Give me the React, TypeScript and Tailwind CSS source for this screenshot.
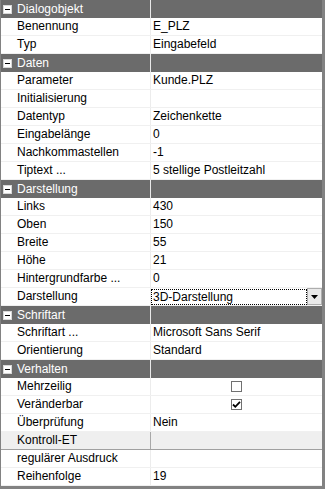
import React from "react";

type Row =
  | { kind: "text"; label: string; value?: string }
  | { kind: "check"; label: string; checked: boolean }
  | { kind: "select"; label: string; value: string }
  | { kind: "disabled"; label: string };

interface Section {
  title: string;
  rows: Row[];
}

const sections: Section[] = [
  {
    title: "Dialogobjekt",
    rows: [
      { kind: "text", label: "Benennung", value: "E_PLZ" },
      { kind: "text", label: "Typ", value: "Eingabefeld" },
    ],
  },
  {
    title: "Daten",
    rows: [
      { kind: "text", label: "Parameter", value: "Kunde.PLZ" },
      { kind: "text", label: "Initialisierung" },
      { kind: "text", label: "Datentyp", value: "Zeichenkette" },
      { kind: "text", label: "Eingabelänge", value: "0" },
      { kind: "text", label: "Nachkommastellen", value: "-1" },
      { kind: "text", label: "Tiptext ...", value: "5 stellige Postleitzahl" },
    ],
  },
  {
    title: "Darstellung",
    rows: [
      { kind: "text", label: "Links", value: "430" },
      { kind: "text", label: "Oben", value: "150" },
      { kind: "text", label: "Breite", value: "55" },
      { kind: "text", label: "Höhe", value: "21" },
      { kind: "text", label: "Hintergrundfarbe ...", value: "0" },
      { kind: "select", label: "Darstellung", value: "3D-Darstellung" },
    ],
  },
  {
    title: "Schriftart",
    rows: [
      { kind: "text", label: "Schriftart ...", value: "Microsoft Sans Serif" },
      { kind: "text", label: "Orientierung", value: "Standard" },
    ],
  },
  {
    title: "Verhalten",
    rows: [
      { kind: "check", label: "Mehrzeilig", checked: false },
      { kind: "check", label: "Veränderbar", checked: true },
      { kind: "text", label: "Überprüfung", value: "Nein" },
      { kind: "disabled", label: "Kontroll-ET" },
      { kind: "text", label: "regulärer Ausdruck" },
      { kind: "text", label: "Reihenfolge", value: "19" },
    ],
  },
];

function MinusBox() {
  return (
    <span className="flex h-[9px] w-[9px] items-center justify-center border border-[#d8d8d8] bg-white">
      <span className="h-[1px] w-[5px] bg-black" />
    </span>
  );
}

function CheckBox({ checked }: { checked: boolean }) {
  return (
    <span className="flex h-[11px] w-[11px] items-center justify-center border border-[#707070] bg-white">
      {checked ? (
        <svg width="9" height="9" viewBox="0 0 9 9">
          <path d="M1 4.5 L3.3 6.8 L8 1.8" fill="none" stroke="#000" strokeWidth="1.8" />
        </svg>
      ) : null}
    </span>
  );
}

function SectionHeader({ title }: { title: string }) {
  return (
    <div className="grid h-[18px] grid-cols-[149px_1px_1fr] bg-[#6b6b6b] text-white">
      <div className="flex items-center gap-[5px] pl-[2px]">
        <MinusBox />
        <span className="leading-[18px]">{title}</span>
      </div>
      <div className="bg-[#e8e8e8]" />
      <div />
    </div>
  );
}

function PropertyRow({ row }: { row: Row }) {
  const disabled = row.kind === "disabled";
  return (
    <div
      className={
        disabled
          ? "grid h-[18px] grid-cols-[149px_1px_1fr] border-b border-[#a0a0a0] bg-[#efefef]"
          : "grid h-[18px] grid-cols-[149px_1px_1fr] border-b border-[#f0f0f0] bg-white"
      }
    >
      <div className="truncate pl-[16px] leading-[17px]">{row.label}</div>
      <div className={disabled ? "bg-[#a8a8a8]" : "bg-[#ececec]"} />
      {row.kind === "text" ? (
        <div className="truncate pl-[2px] leading-[17px]">{row.value}</div>
      ) : null}
      {row.kind === "check" ? (
        <div className="flex items-center justify-center">
          <CheckBox checked={row.checked} />
        </div>
      ) : null}
      {row.kind === "select" ? (
        <div className="flex h-[17px] items-center">
          <div className="flex h-[16px] flex-1 items-center border border-dotted border-black pl-[1px] leading-[14px]">
            {row.value}
          </div>
          <div className="flex h-[17px] w-[15px] items-center justify-center border border-[#adadad] bg-[#e9e9e9]">
            <svg width="7" height="4" viewBox="0 0 7 4">
              <path d="M0 0 H7 L3.5 4 Z" fill="#000" />
            </svg>
          </div>
        </div>
      ) : null}
      {disabled ? <div /> : null}
    </div>
  );
}

export default function App() {
  return (
    <div
      className="h-[489px] w-[325px] overflow-hidden border-b-[3px] border-l border-r-[3px] border-[#828282] bg-white text-[12px] text-black"
      style={{ fontFamily: '"Liberation Sans", Arial, sans-serif' }}
    >
      {sections.map((section) => (
        <div key={section.title}>
          <SectionHeader title={section.title} />
          {section.rows.map((row) => (
            <PropertyRow key={section.title + row.label} row={row} />
          ))}
        </div>
      ))}
    </div>
  );
}
